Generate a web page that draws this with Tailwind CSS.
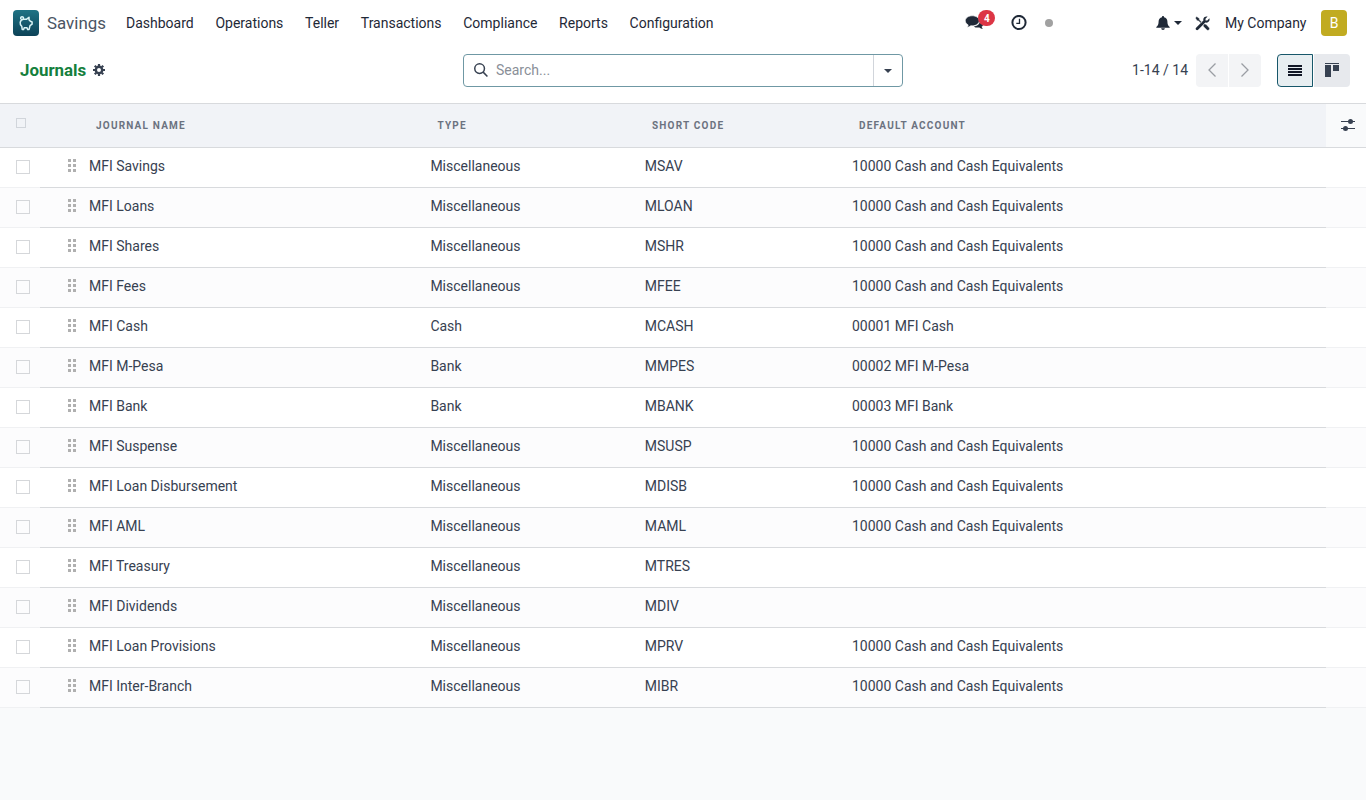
<!DOCTYPE html>
<html lang="en">

<head>
    <meta charset="UTF-8">
    <meta name="viewport" content="width=device-width, initial-scale=1.0">
    <title>Savings - Journals</title>
    <script src="https://cdn.jsdelivr.net/npm/@tailwindcss/browser@4"></script>
</head>

<body class="h-screen overflow-hidden bg-[#f9fafb] font-[Roboto,sans-serif] text-[14px] text-[#374151]">

    <!-- Navbar -->
    <header class="flex h-[46px] items-center bg-white pl-[13px] pr-[19px] text-[#1f2937]">
        <svg class="h-[26px] w-[26px] shrink-0" viewBox="0 0 26 26" fill="none">
            <defs>
                <linearGradient id="logo" x1="0" y1="0" x2="0" y2="1">
                    <stop offset="0" stop-color="#1f7385" />
                    <stop offset="1" stop-color="#0c4257" />
                </linearGradient>
            </defs>
            <rect width="26" height="26" rx="4" fill="url(#logo)" />
            <path d="M10.300 8.800C10.800 7.600 10 6.600 8.900 6.700 7.500 6.900 7.300 8.400 8.200 9.200M10.500 9.300h2.800l2.700-2v2.400l1.400 1.600 1.700.7v2.200l-2.100 1.500-.9 3.700h-1.500l-.6-1.700h-2.800l-.6 1.700H9.200l-.4-3.100C7.500 15.300 7 14 7.200 12.500 7.500 10.600 8.600 9.500 10.500 9.300z" stroke="#d9f3f5" stroke-width="1.500" stroke-linejoin="round" stroke-linecap="round" />
        </svg>
        <span class="ml-2 w-[79px] text-[16.900px] leading-[26px] text-[#4b5563]">Savings</span>
        <nav class="flex gap-[21.700px]">
            <a>Dashboard</a>
            <a>Operations</a>
            <a>Teller</a>
            <a>Transactions</a>
            <a>Compliance</a>
            <a>Reports</a>
            <a>Configuration</a>
        </nav>
        <div class="ml-auto flex items-center">
            <div class="relative mr-[27px] h-[16px] w-[19px]">
                <svg class="h-[16px] w-[19px]" viewBox="0 0 19 16" fill="currentColor">
                    <path d="M14.800 4.500c2.200.6 3.700 2 3.700 3.900 0 1.300-.7 2.500-1.900 3.300.2.900.6 1.400 1.300 2.100-1.500 0-2.700-.5-3.500-1.300-2.200.3-4.400-.1-5.700-1.100 3.800-.2 6.800-2.700 6.100-6.900z" />
                    <path d="M7.300.8c3.900 0 7 2.200 7 5s-3.100 5-7 5c-.5 0-1 0-1.500-.1-1 .9-2.300 1.400-3.800 1.500.7-.7 1.100-1.300 1.200-2.300C1.400 9 .3 7.500.3 5.800c0-2.800 3.100-5 7-5z" stroke="white" stroke-width=".6" />
                </svg>
                <span class="absolute -top-[5px] left-[13px] flex h-4 w-[17px] items-center justify-center rounded-full bg-[#dc3545] text-[10px] font-bold text-white">4</span>
            </div>
            <svg class="mr-[17.500px] h-4 w-4" viewBox="0 0 16 16" fill="none" stroke="currentColor">
                <circle cx="8" cy="7.500" r="6.600" stroke-width="2" />
                <path d="M8.500 3.800v4.500H5.300" stroke-width="1.300" />
            </svg>
            <span class="mr-[103.500px] h-2 w-2 rounded-full bg-[#a1a1a1]"></span>
            <svg class="mr-1 h-[14px] w-[14px]" viewBox="0 0 14 14" fill="currentColor">
                <path d="M7 0c.6 0 1 .4 1 1v.3c2.100.4 3.400 2 3.400 4.200 0 2.800.6 4.200 2.300 5.500v.8H.3V11c1.700-1.300 2.300-2.700 2.300-5.500 0-2.200 1.300-3.800 3.400-4.200V1c0-.6.400-1 1-1zM5.200 12.200h3.600c0 1-.8 1.700-1.800 1.700s-1.800-.7-1.800-1.700z" />
            </svg>
            <svg class="mr-[13px] h-1 w-2" viewBox="0 0 8 4" fill="currentColor"><path d="M0 0h8L4 4z" /></svg>
            <svg class="mr-[14.500px] h-[15px] w-[15px]" viewBox="0 0 15 15" fill="currentColor">
                <!-- wrench -->
                <path d="M12.600.6L10.500 2.700v1.700h1.800l2.100-2.100c.5 1.700-.2 3.300-1.500 4-.9.5-1.700.4-2.500.2L3.100 13.800c-.6.6-1.400.6-2 0s-.6-1.400 0-2L8.400 4.500c-.3-1.400.1-2.600 1.200-3.400.9-.7 2-.8 3-.5z" />
                <!-- screwdriver -->
                <path d="M1.700.6L4.400 2.400v1.400l2.300 2.300-1 1L3.400 4.800H2.100L.4 2zM9 8.100c.8-.3 1.600-.1 2.200.5l2.800 2.800c.7.700.7 1.700 0 2.400s-1.600.7-2.300 0L8.900 11c-.6-.6-.8-1.400-.5-2.100z" stroke="white" stroke-width=".4" />
            </svg>
            <span class="mr-[14.500px]">My Company</span>
            <span class="flex h-[26px] w-[26px] items-center justify-center rounded bg-[#c1ab21] text-white">B</span>
        </div>
    </header>

    <!-- Control panel -->
    <section class="flex h-[57px] items-start bg-white pl-5 pr-4 pt-2">
        <div class="flex h-[33px] w-[443px] items-center">
            <h1 class="pt-px text-[16.900px] font-bold text-[#15803d]">Journals</h1>
            <svg class="mb-px ml-[7px] h-3 w-3" viewBox="0 0 12 12" fill="none" stroke="#374151">
                <circle cx="6" cy="6" r="3.200" stroke-width="2.400" />
                <path d="M6 0v2.200M6 9.800V12M0 6h2.200M9.800 6H12M1.750 1.750l1.550 1.550M8.700 8.700l1.550 1.550M1.750 10.250L3.300 8.700M8.700 3.300l1.550-1.550" stroke-width="2.200" />
            </svg>
        </div>
        <div class="flex h-[33px] w-[440px] items-center rounded border border-[#6f98a4]">
            <svg class="mb-px ml-[10px] h-[14px] w-[14px]" viewBox="0 0 15 15" fill="none" stroke="#374151" stroke-width="1.600">
                <circle cx="6" cy="6" r="5.200" />
                <path d="M9.800 9.800l4.600 4.600" />
            </svg>
            <span class="ml-2 grow text-[#8a8f98]">Search...</span>
            <div class="flex h-full w-[29px] items-center justify-center border-l border-[#d1d5db]">
                <svg class="h-1 w-2" viewBox="0 0 8 4" fill="#374151"><path d="M0 0h8L4 4z" /></svg>
            </div>
        </div>
        <div class="ml-auto flex h-[33px] items-center">
            <span class="mr-2">1-14 / 14</span>
            <div class="mr-4 flex h-full gap-px">
                <button class="flex w-8 items-center justify-center rounded-l bg-[#f3f4f6]">
                    <svg class="mb-px h-[14px] w-2" viewBox="0 0 8 14" fill="none" stroke="#9a9da3" stroke-width="1.300"><path d="M7.500.5L1 7l6.500 6.500" /></svg>
                </button>
                <button class="flex w-8 items-center justify-center rounded-r bg-[#f3f4f6]">
                    <svg class="mb-px h-[14px] w-2" viewBox="0 0 8 14" fill="none" stroke="#9a9da3" stroke-width="1.300"><path d="M.5.5L7 7 .5 13.500" /></svg>
                </button>
            </div>
            <div class="flex h-full gap-px">
                <button class="flex w-9 items-center justify-center rounded-l border border-[#17576a] bg-[#e7eef1]">
                    <svg class="mb-px h-[11px] w-[14px]" viewBox="0 0 14 11" fill="#111827"><path d="M0 0h14v2H0zM0 3h14v2H0zM0 6h14v2H0zM0 9h14v2H0z" /></svg>
                </button>
                <button class="flex w-9 items-center justify-center rounded-r bg-[#e7e9ed]">
                    <svg class="mb-px h-[14px] w-[14px]" viewBox="0 0 14 14" fill="#374151"><path d="M0 0h14v1H0zM0 2h6v12H0zM8 2h6v6H8z" /></svg>
                </button>
            </div>
        </div>
    </section>

    <!-- Journals list -->
    <main>
        <div class="flex h-[45px] border-y border-[#d8dadd] text-[10px] font-bold uppercase tracking-[1.200px] text-[#6b7280]">
            <div class="grid w-[1326px] grid-cols-[96px_341.500px_214.500px_207px_1fr] items-center bg-[#f1f3f7]">
                <span class="mb-[5px] ml-4 h-[10px] w-[10px] border border-[#d1d5db]"></span>
                <span>Journal Name</span>
                <span>Type</span>
                <span>Short Code</span>
                <span>Default Account</span>
            </div>
            <div class="flex w-10 items-center justify-center pb-px pl-1">
                <svg class="h-3 w-[14px]" viewBox="0 0 14 12" fill="#374151">
                    <path d="M0 2h14v1H0zM0 9h14v1H0z" />
                    <circle cx="9.500" cy="2.500" r="2.500" />
                    <circle cx="4.500" cy="9.500" r="2.500" />
                </svg>
            </div>
        </div>
        <div id="rows"></div>
    </main>

    <script>
        const cash = '10000 Cash and Cash Equivalents';
        const journals = [
            ['MFI Savings', 'Miscellaneous', 'MSAV', cash],
            ['MFI Loans', 'Miscellaneous', 'MLOAN', cash],
            ['MFI Shares', 'Miscellaneous', 'MSHR', cash],
            ['MFI Fees', 'Miscellaneous', 'MFEE', cash],
            ['MFI Cash', 'Cash', 'MCASH', '00001 MFI Cash'],
            ['MFI M-Pesa', 'Bank', 'MMPES', '00002 MFI M-Pesa'],
            ['MFI Bank', 'Bank', 'MBANK', '00003 MFI Bank'],
            ['MFI Suspense', 'Miscellaneous', 'MSUSP', cash],
            ['MFI Loan Disbursement', 'Miscellaneous', 'MDISB', cash],
            ['MFI AML', 'Miscellaneous', 'MAML', cash],
            ['MFI Treasury', 'Miscellaneous', 'MTRES', ''],
            ['MFI Dividends', 'Miscellaneous', 'MDIV', ''],
            ['MFI Loan Provisions', 'Miscellaneous', 'MPRV', cash],
            ['MFI Inter-Branch', 'Miscellaneous', 'MIBR', cash],
        ];

        document.getElementById('rows').innerHTML = journals.map(([name, type, code, account]) => `
            <div class="flex h-10 bg-white even:bg-[#fcfcfd]">
                <div class="flex w-10 items-center border-b border-[#f0f1f3] pb-px pl-4">
                    <span class="h-[14px] w-[14px] border border-[#d5d7da]"></span>
                </div>
                <div class="grid w-[1286px] grid-cols-[49px_341.400px_214.400px_207.200px_1fr] items-center border-b border-[#d8dadd] pb-[3px]">
                    <svg class="mb-px ml-7 h-[13px] w-[9px]" viewBox="0 0 9 13" fill="#b0b0b0">
                        <path d="M0 0h3v3H0zM5 0h3v3H5zM0 5h3v3H0zM5 5h3v3H5zM0 10h3v3H0zM5 10h3v3H5z" />
                    </svg>
                    <span>${name}</span>
                    <span>${type}</span>
                    <span>${code}</span>
                    <span>${account}</span>
                </div>
                <div class="w-10 border-b border-[#f0f1f3]"></div>
            </div>`).join('');
    </script>
</body>

</html>
